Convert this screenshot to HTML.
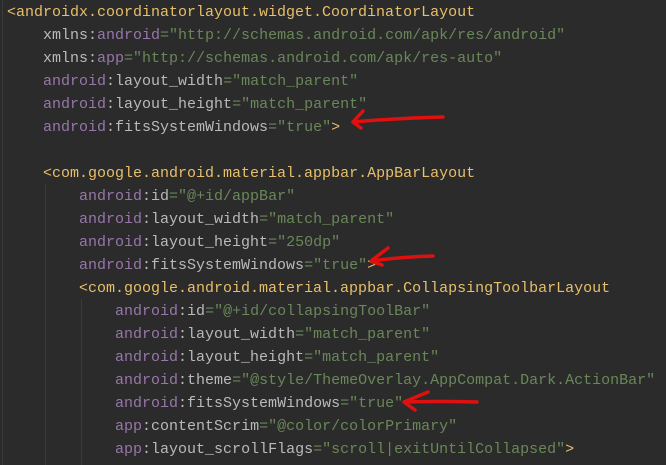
<!DOCTYPE html>
<html><head><meta charset="utf-8"><style>
html,body{margin:0;padding:0;width:666px;height:465px;overflow:hidden;background:#2b2b2b}
pre{margin:0;position:absolute;left:7px;top:1px;font-family:"Liberation Mono",monospace;font-size:15px;line-height:23px;color:#bababa;letter-spacing:0}
.t{color:#e8bf6a}.n{color:#9876aa}.v{color:#6a8759}.a{color:#bababa}
.g{position:absolute;width:1px;background:#3b3b3b}
</style></head><body>
<div class="g" style="left:2px;top:0;height:465px;background:#3a3a3a"></div>
<div class="g" style="left:45px;top:184px;height:281px"></div>
<div class="g" style="left:81px;top:299px;height:166px"></div>
<pre><span class="t">&lt;androidx.coordinatorlayout.widget.CoordinatorLayout</span>
    <span class="a">xmlns:</span><span class="n">android</span><span class="v">="http://schemas.android.com/apk/res/android"</span>
    <span class="a">xmlns:</span><span class="n">app</span><span class="v">="http://schemas.android.com/apk/res-auto"</span>
    <span class="n">android</span>:layout_width<span class="v">="match_parent"</span>
    <span class="n">android</span>:layout_height<span class="v">="match_parent"</span>
    <span class="n">android</span>:fitsSystemWindows<span class="v">="true"</span><span class="t">&gt;</span>

    <span class="t">&lt;com.google.android.material.appbar.AppBarLayout</span>
        <span class="n">android</span>:id<span class="v">="@+id/appBar"</span>
        <span class="n">android</span>:layout_width<span class="v">="match_parent"</span>
        <span class="n">android</span>:layout_height<span class="v">="250dp"</span>
        <span class="n">android</span>:fitsSystemWindows<span class="v">="true"</span><span class="t">&gt;</span>
        <span class="t">&lt;com.google.android.material.appbar.CollapsingToolbarLayout</span>
            <span class="n">android</span>:id<span class="v">="@+id/collapsingToolBar"</span>
            <span class="n">android</span>:layout_width<span class="v">="match_parent"</span>
            <span class="n">android</span>:layout_height<span class="v">="match_parent"</span>
            <span class="n">android</span>:theme<span class="v">="@style/ThemeOverlay.AppCompat.Dark.ActionBar"</span>
            <span class="n">android</span>:fitsSystemWindows<span class="v">="true"</span>
            <span class="n">app</span>:contentScrim<span class="v">="@color/colorPrimary"</span>
            <span class="n">app</span>:layout_scrollFlags<span class="v">="scroll|exitUntilCollapsed"</span><span class="t">&gt;</span></pre>
<svg width="666" height="465" style="position:absolute;left:0;top:0" fill="none" stroke="#e01010" stroke-width="3.5" stroke-linecap="round" stroke-linejoin="round">
<path d="M443 117 Q400 118 353 122 M363 111 L353 122 L361 128"/>
<path d="M433 256 Q400 257 371 261 M388 248 L371 261 L382 265"/>
<path d="M477 402 Q440 401 404 402 M428 392 L404 402 L415 410"/>
</svg>
</body></html>
